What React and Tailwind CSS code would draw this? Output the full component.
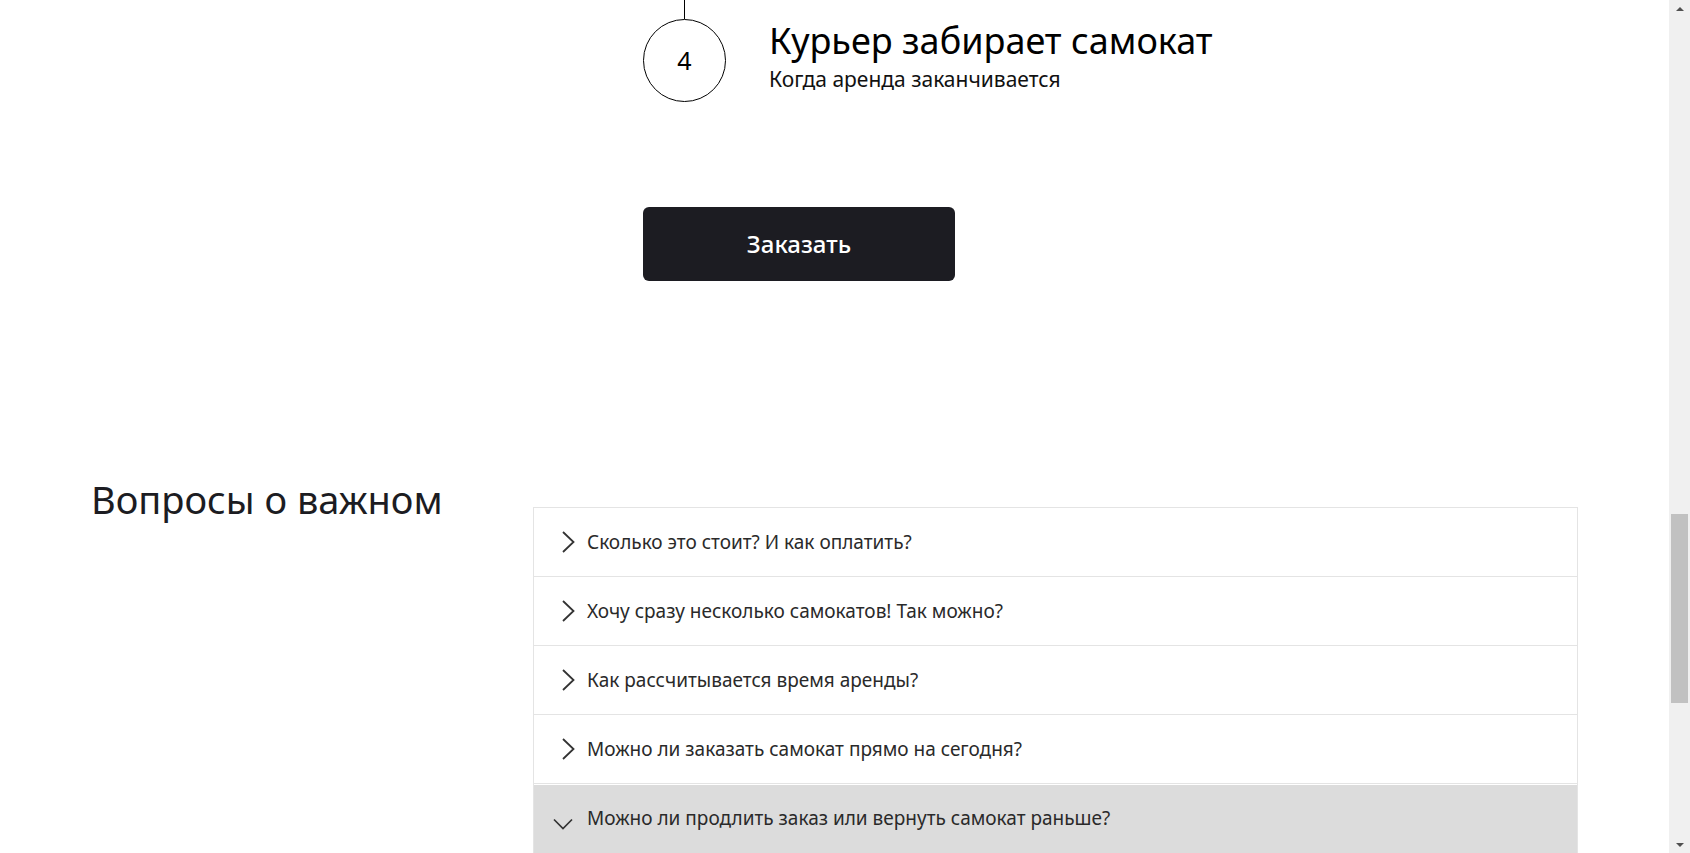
const faq = [
  'Сколько это стоит? И как оплатить?',
  'Хочу сразу несколько самокатов! Так можно?',
  'Как рассчитывается время аренды?',
  'Можно ли заказать самокат прямо на сегодня?',
]

function ChevronRight() {
  return (
    <svg width="15" height="24" viewBox="0 0 15 24" fill="none" className="shrink-0">
      <path d="M2 2 L12.5 12 L2 22" stroke="#333" strokeWidth="1.8" />
    </svg>
  )
}

function ChevronDown() {
  return (
    <svg width="20" height="12" viewBox="0 0 20 12" fill="none" className="shrink-0">
      <path d="M1 1.5 L10 10.5 L19 1.5" stroke="#333" strokeWidth="1.7" />
    </svg>
  )
}

export default function App() {
  return (
    <div className="h-[853px] overflow-hidden flex bg-white" style={{ fontFamily: '"Noto Sans", "Open Sans", sans-serif' }}>
      <div className="flex-1">
        {/* last step */}
        <div className="pl-[643px] flex gap-[43px]">
          <div className="flex flex-col items-center w-[83px] shrink-0">
            <div className="w-px h-[19px] bg-black"></div>
            <div className="w-[83px] h-[83px] rounded-full border border-black flex items-center justify-center text-[25px] text-black">4</div>
          </div>
          <div className="pt-[20px]">
            <h3 className="text-[36px] leading-[42px] text-black">Курьер забирает самокат</h3>
            <p className="mt-[4px] text-[21px] leading-[26px] text-[#111]">Когда аренда заканчивается</p>
          </div>
        </div>

        <div className="pl-[643px] mt-[105px]">
          <button className="w-[312px] h-[74px] rounded-md bg-[#1c1c22] text-white text-[24px] font-medium">Заказать</button>
        </div>

        {/* faq */}
        <div className="mt-[226px] px-[91px] flex">
          <h2 className="w-[442px] shrink-0 -mt-[33px] text-[38px] leading-[50px] text-[#1c1c22]">Вопросы о важном</h2>
          <div className="flex-1 border border-[#e4e4e4]">
            {faq.map(q => (
              <div key={q} className="h-[69px] border-b border-[#e4e4e4] flex items-center gap-[11px] pl-[27px]">
                <ChevronRight />
                <span className="text-[19px] text-[#2a2a2a]">{q}</span>
              </div>
            ))}
            <div className="h-[70px] mt-[1px] bg-[#dcdcdc] flex items-center gap-[14px] pl-[19px] pt-[8px]">
              <ChevronDown />
              <span className="text-[19px] text-[#2a2a2a] -mt-[12px]">Можно ли продлить заказ или вернуть самокат раньше?</span>
            </div>
          </div>
        </div>
      </div>

      {/* scrollbar */}
      <div className="w-[21px] shrink-0 bg-[#f0f0f0] flex flex-col items-center">
        <div className="h-[17px] flex items-center justify-center">
          <div className="w-0 h-0 border-x-[4px] border-x-transparent border-b-[4px] border-b-[#505050]"></div>
        </div>
        <div className="flex-1 w-full px-[2px] pt-[497px]">
          <div className="h-[189px] bg-[#c1c1c1]"></div>
        </div>
        <div className="h-[17px] flex items-center justify-center">
          <div className="w-0 h-0 border-x-[4px] border-x-transparent border-t-[4px] border-t-[#505050]"></div>
        </div>
      </div>
    </div>
  )
}
